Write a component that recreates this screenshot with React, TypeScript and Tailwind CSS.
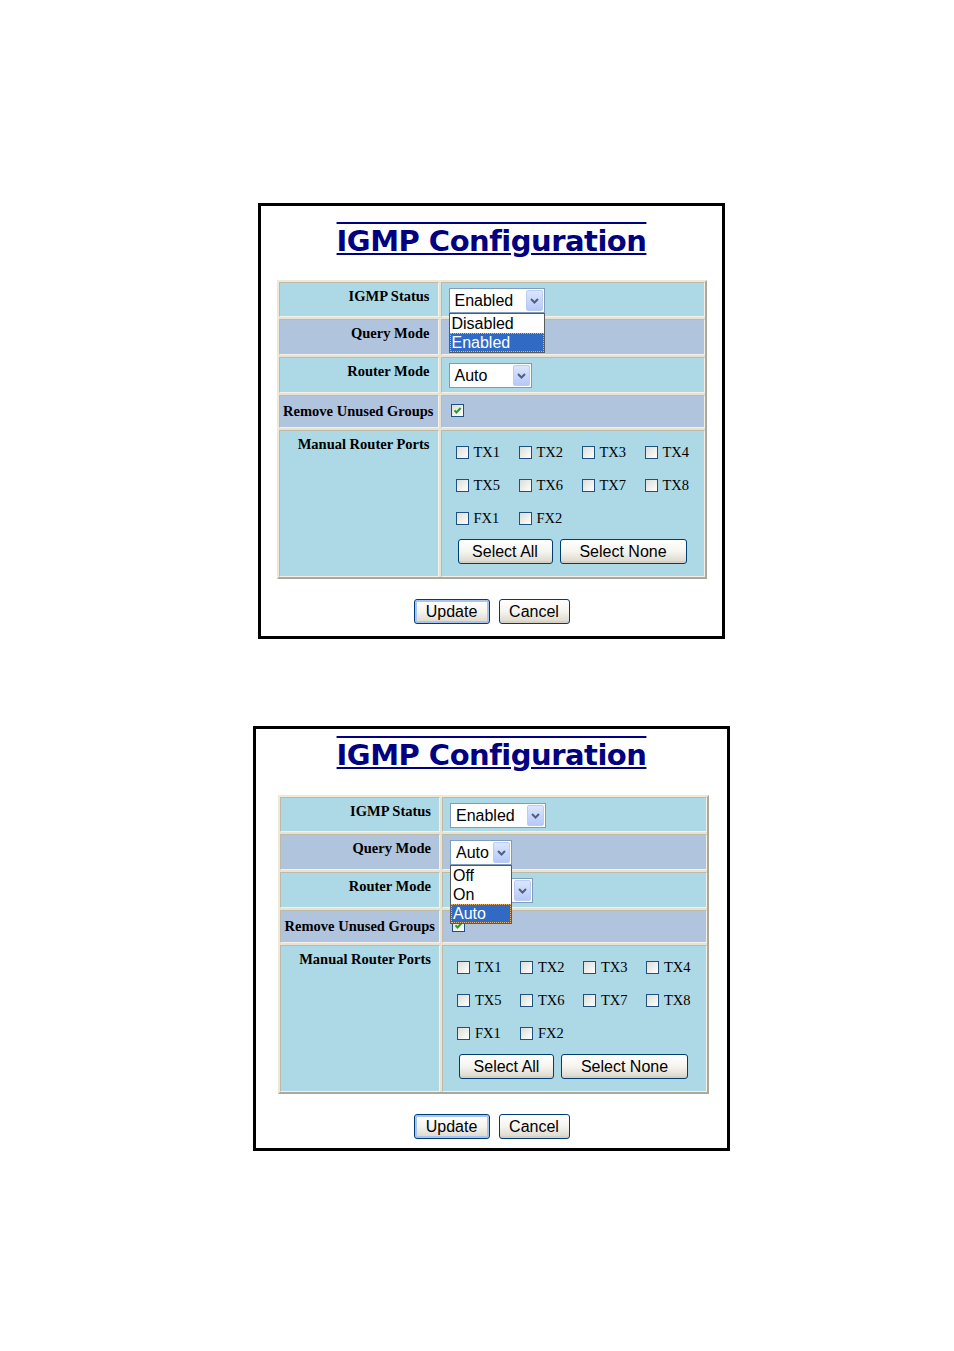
import React from 'react';

type Menu = 'status' | 'query';

const serif = "font-['Liberation_Serif',serif]";
const sans = "font-['Liberation_Sans',Arial,sans-serif]";

const ports = ['TX1', 'TX2', 'TX3', 'TX4', 'TX5', 'TX6', 'TX7', 'TX8', 'FX1', 'FX2'];

function Chevron() {
  return (
    <svg width="9" height="6" viewBox="0 0 9 6">
      <path d="M1 1l3.5 3.5L8 1" fill="none" stroke="#4d6185" strokeWidth="2" />
    </svg>
  );
}

function SelectBox({ value, w }: { value: string; w: string }) {
  return (
    <div className={`flex h-[25px] items-center justify-between border border-[#7f9db9] bg-white pl-[5px] pr-px ${w}`}>
      <span className={`${sans} text-[16px] leading-none text-black`}>{value}</span>
      <span className="flex h-[21px] w-[17px] items-center justify-center rounded-[2px] border border-[#bccdf5] bg-linear-to-b from-[#dce6fd] to-[#b6c9f6]">
        <Chevron />
      </span>
    </div>
  );
}

function DropList({ options, selected, w }: { options: string[]; selected: string; w: string }) {
  return (
    <div className={`absolute left-0 top-full z-10 border border-[#5a5a5a] bg-white ${w}`}>
      {options.map((o) => (
        <div
          key={o}
          className={`${sans} h-[19px] px-[2px] text-[16px] leading-[19px] ${
            o === selected
              ? 'bg-[#316ac5] text-white outline-1 -outline-offset-1 outline-dotted outline-[#e6b46c]'
              : 'text-black'
          }`}
        >
          {o}
        </div>
      ))}
    </div>
  );
}

function Box({ checked }: { checked?: boolean }) {
  return (
    <span className="flex h-[13px] w-[13px] shrink-0 items-center justify-center border border-[#1c5180] bg-linear-to-br from-[#dcdcd7] to-white">
      {checked && (
        <svg width="9" height="9" viewBox="0 0 9 9">
          <path d="M1.5 4.3l2 2.2L7.6 2" fill="none" stroke="#21a121" strokeWidth="2" />
        </svg>
      )}
    </span>
  );
}

function XpButton({ label, w, primary }: { label: string; w: string; primary?: boolean }) {
  return (
    <button
      type="button"
      className={`${sans} h-[25px] ${w} rounded-[3px] border border-[#003c74] bg-linear-to-b from-white via-[#f5f4ef] to-[#dad6ca] text-[16px] leading-none text-black ${
        primary ? 'shadow-[inset_0_0_0_2px_#a9c4f1]' : 'shadow-[inset_0_-2px_0_#d6d0c5]'
      }`}
    >
      {label}
    </button>
  );
}

const cellEdge =
  'border border-t-[#bdbaa9] border-l-[#bdbaa9] border-b-[#f3f1e9] border-r-[#f3f1e9]';
const odd = 'bg-[#add8e6]';
const even = 'bg-[#b0c4de]';
const label = `${serif} text-right text-[14.5px] font-bold leading-[18px] text-black`;

function Panel({
  box,
  titleGap,
  tableGap,
  cols,
  menu,
}: {
  box: string;
  titleGap: string;
  tableGap: string;
  cols: string;
  menu: Menu;
}) {
  return (
    <div className={`flex flex-col items-center border-[3px] border-black bg-white ${box}`}>
      <h1
        className={`${titleGap} font-['DejaVu_Sans',Verdana,sans-serif] text-[29px] font-bold leading-[34px] tracking-[-0.5px] text-[#000080] decoration-[#000080] [text-decoration-line:underline_overline]`}
      >
        IGMP Configuration
      </h1>

      <div
        className={`${tableGap} grid ${cols} grid-rows-[35px_36px_36px_33px_147px] gap-[2px] border-2 border-t-[#ece9d8] border-l-[#ece9d8] border-b-[#aca899] border-r-[#aca899] bg-[#e6e3d4]`}
      >
        {/* IGMP Status */}
        <div className={`${cellEdge} ${odd} pr-[8px] pt-[4px] ${label}`}>IGMP Status</div>
        <div className={`${cellEdge} ${odd} pl-[7px] pt-[5px]`}>
          <div className="relative w-fit">
            <SelectBox value="Enabled" w="w-[96px]" />
            {menu === 'status' && (
              <DropList options={['Disabled', 'Enabled']} selected="Enabled" w="w-[96px]" />
            )}
          </div>
        </div>

        {/* Query Mode */}
        <div className={`${cellEdge} ${even} pr-[8px] pt-[4px] ${label}`}>Query Mode</div>
        <div className={`${cellEdge} ${even} pl-[7px] pt-[5px]`}>
          <div className="relative w-fit">
            <SelectBox value="Auto" w="w-[62px]" />
            {menu === 'query' && (
              <DropList options={['Off', 'On', 'Auto']} selected="Auto" w="w-[62px]" />
            )}
          </div>
        </div>

        {/* Router Mode */}
        <div className={`${cellEdge} ${odd} pr-[8px] pt-[4px] ${label}`}>Router Mode</div>
        <div className={`${cellEdge} ${odd} pl-[7px] pt-[5px]`}>
          <SelectBox value="Auto" w="w-[83px]" />
        </div>

        {/* Remove Unused Groups */}
        <div className={`${cellEdge} ${even} pr-[4px] pt-[6px] ${label}`}>Remove Unused Groups</div>
        <div className={`${cellEdge} ${even} pl-[9px] pt-[8px]`}>
          <Box checked />
        </div>

        {/* Manual Router Ports */}
        <div className={`${cellEdge} ${odd} pr-[8px] pt-[4px] ${label}`}>Manual Router Ports</div>
        <div className={`${cellEdge} ${odd} pl-[14px] pt-[5px]`}>
          <div className="grid grid-cols-[63px_63px_63px_63px] auto-rows-[33px]">
            {ports.map((p) => (
              <label key={p} className="flex items-center gap-[5px]">
                <Box />
                <span className={`${serif} text-[14.5px] leading-none text-black`}>{p}</span>
              </label>
            ))}
          </div>
          <div className="ml-[2px] mt-[4px] flex gap-[7px]">
            <XpButton label="Select All" w="w-[95px]" />
            <XpButton label="Select None" w="w-[127px]" />
          </div>
        </div>
      </div>

      <div className="mt-[20px] flex gap-[9px]">
        <XpButton label="Update" w="w-[76px]" primary />
        <XpButton label="Cancel" w="w-[71px]" />
      </div>
    </div>
  );
}

export default function App() {
  return (
    <div className="min-h-[1351px] w-full bg-white pt-[203px]">
      <Panel
        box="ml-[258px] h-[436px] w-[467px]"
        titleGap="mt-[18px]"
        tableGap="mt-[22px]"
        cols="grid-cols-[160px_264px]"
        menu="status"
      />
      <Panel
        box="ml-[253px] mt-[87px] h-[425px] w-[477px]"
        titleGap="mt-[9px]"
        tableGap="ml-[4px] mt-[23px]"
        cols="grid-cols-[160px_265px]"
        menu="query"
      />
    </div>
  );
}
